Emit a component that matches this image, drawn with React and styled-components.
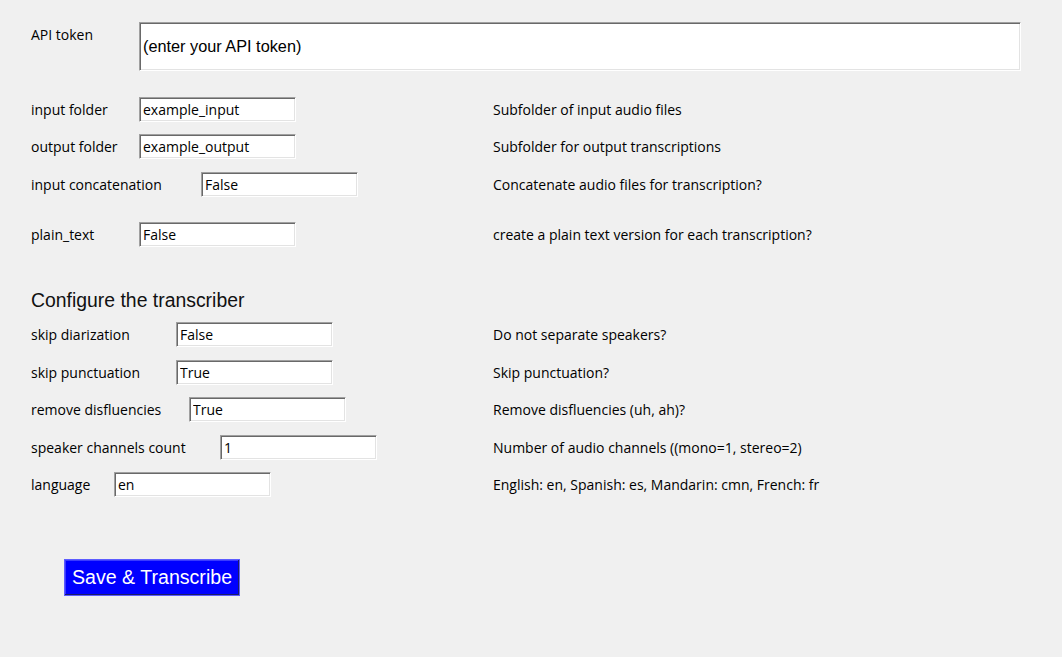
import React from 'react';
import styled, { createGlobalStyle } from 'styled-components';

const Global = createGlobalStyle`
  html, body {
    margin: 0;
    padding: 0;
    background: #f0f0f0;
  }
  body {
    font-family: 'Open Sans', 'Noto Sans', sans-serif;
    font-size: 14px;
    color: #000;
  }
`;

const Window = styled.div`
  width: 1062px;
  height: 657px;
  background: #f0f0f0;
  box-sizing: border-box;
  padding: 22px 0 0 31px;
  overflow: hidden;
`;

const TokenRow = styled.div`
  display: flex;
  align-items: flex-start;
`;

const TokenLabel = styled.div`
  width: 108px;
  padding-top: 3px;
  line-height: 20px;
`;

const sunken = `
  box-sizing: border-box;
  background: #fff;
  border-style: solid;
  border-width: 1px;
  border-color: #a0a0a0 #ffffff #ffffff #a0a0a0;
  box-shadow: inset 1px 1px 0 #696969, inset -1px -1px 0 #e3e3e3;
  outline: none;
  margin: 0;
`;

const TokenEntry = styled.input`
  ${sunken}
  width: 882px;
  height: 49px;
  padding: 0 0 0 3px;
  font-family: 'Liberation Sans', Arial, sans-serif;
  font-size: 16.3px;
  color: #000;
`;

const Row = styled.div`
  display: grid;
  grid-template-columns: 462px 1fr;
  align-items: center;
  height: 25px;
  margin-top: ${({ $gap }) => $gap}px;
`;

const Field = styled.div`
  display: flex;
  align-items: center;
`;

const Label = styled.div`
  width: ${({ $entryX }) => $entryX - 31}px;
  flex-shrink: 0;
  white-space: nowrap;
`;

const Entry = styled.input`
  ${sunken}
  width: 157px;
  height: 25px;
  padding: 0 0 0 3px;
  font-family: 'Open Sans', 'Noto Sans', sans-serif;
  font-size: 14px;
  color: #000;
`;

const Desc = styled.div`
  white-space: nowrap;
`;

const Heading = styled.div`
  margin-top: 42px;
  font-family: 'Liberation Sans', Arial, sans-serif;
  font-size: 19.4px;
  line-height: 22px;
  color: #111;
`;

const ButtonWrap = styled.div`
  margin-top: 62px;
  padding-left: 33px;
`;

const SaveButton = styled.button`
  box-sizing: border-box;
  width: 176px;
  height: 37px;
  background: #0000ff;
  color: #fff;
  font-family: 'Liberation Sans', Arial, sans-serif;
  font-size: 19.6px;
  border: 1px solid #5c5cff;
  box-shadow: inset -1px -1px 0 #1a1a6e, inset 1px 1px 0 #3a3aff;
  padding: 0;
  cursor: pointer;
`;

const topRows = [
  { label: 'input folder', x: 139, value: 'example_input', desc: 'Subfolder of input audio files', gap: 26 },
  { label: 'output folder', x: 139, value: 'example_output', desc: 'Subfolder for output transcriptions', gap: 12 },
  { label: 'input concatenation', x: 201, value: 'False', desc: 'Concatenate audio files for transcription?', gap: 13 },
  { label: 'plain_text', x: 139, value: 'False', desc: 'create a plain text version for each transcription?', gap: 25 },
];

const configRows = [
  { label: 'skip diarization', x: 176, value: 'False', desc: 'Do not separate speakers?', gap: 11 },
  { label: 'skip punctuation', x: 176, value: 'True', desc: 'Skip punctuation?', gap: 13 },
  { label: 'remove disfluencies', x: 189, value: 'True', desc: 'Remove disfluencies (uh, ah)?', gap: 12 },
  { label: 'speaker channels count', x: 220, value: '1', desc: 'Number of audio channels ((mono=1, stereo=2)', gap: 13 },
  { label: 'language', x: 114, value: 'en', desc: 'English: en, Spanish: es, Mandarin: cmn, French: fr', gap: 12 },
];

const SettingRow = ({ label, x, value, desc, gap }) => (
  <Row $gap={gap}>
    <Field>
      <Label $entryX={x}>{label}</Label>
      <Entry defaultValue={value} />
    </Field>
    <Desc>{desc}</Desc>
  </Row>
);

export default function App() {
  return (
    <Window>
      <Global />
      <TokenRow>
        <TokenLabel>API token</TokenLabel>
        <TokenEntry defaultValue="(enter your API token)" />
      </TokenRow>
      {topRows.map((r) => (
        <SettingRow key={r.label} {...r} />
      ))}
      <Heading>Configure the transcriber</Heading>
      {configRows.map((r) => (
        <SettingRow key={r.label} {...r} />
      ))}
      <ButtonWrap>
        <SaveButton>Save &amp; Transcribe</SaveButton>
      </ButtonWrap>
    </Window>
  );
}
